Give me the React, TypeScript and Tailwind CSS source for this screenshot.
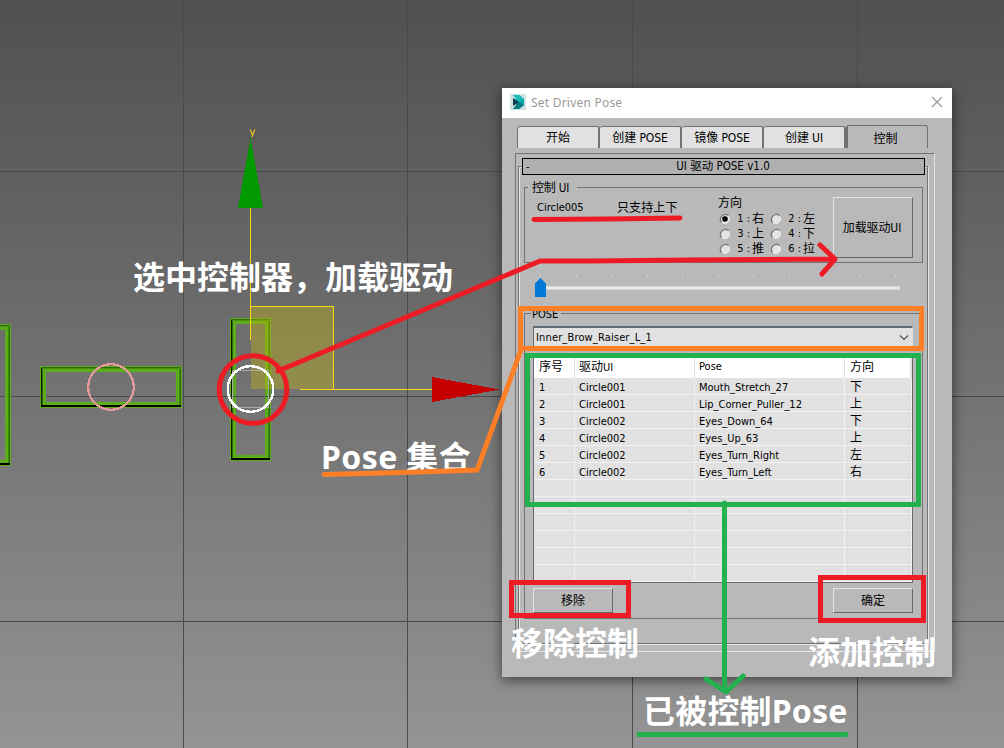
import React from "react";

const UI = "font-['DejaVu_Sans_Condensed','Noto_Sans_CJK_SC',sans-serif]";

const rows = [
  ["1", "Circle001", "Mouth_Stretch_27", "下"],
  ["2", "Circle001", "Lip_Corner_Puller_12", "上"],
  ["3", "Circle002", "Eyes_Down_64", "下"],
  ["4", "Circle002", "Eyes_Up_63", "上"],
  ["5", "Circle002", "Eyes_Turn_Right", "左"],
  ["6", "Circle002", "Eyes_Turn_Left", "右"],
  ["", "", "", ""],
  ["", "", "", ""],
  ["", "", "", ""],
  ["", "", "", ""],
  ["", "", "", ""],
  ["", "", "", ""],
];

function Frame({ x, y, w, h }: { x: number; y: number; w: number; h: number }) {
  const r = x + w;
  const b = y + h;
  return (
    <g fill="none" shapeRendering="crispEdges">
      <rect x={x + 3} y={y + 3} width={w - 6} height={h - 6} stroke="#5bad1c" strokeWidth="6" />
      <path d={`M${x + 1} ${y + 1.5}H${r - 1.5}V${b - 1}`} stroke="#2f6a0d" />
      <path d={`M${x + 2} ${y + 2.5}H${r - 3}`} stroke="#448f14" />
      <path d={`M${x + 1.5} ${y + 2}V${b - 1}`} stroke="#0a1500" />
      <path d={`M${x + 2.5} ${y + 3}V${b - 3}`} stroke="#2f6a0d" />
      <path d={`M${r - 2.5} ${y + 3}V${b - 3}`} stroke="#3f8512" />
      <path d={`M${x + 1} ${b - 2}H${r - 1}`} stroke="#000" strokeWidth="2" />
    </g>
  );
}

function Scene() {
  return (
    <svg className="absolute inset-0" width="1004" height="748" viewBox="0 0 1004 748">
      <Frame x={-100} y={324} w={111} h={142} />
      <Frame x={40} y={366} w={142} h={42} />
      <Frame x={230} y={318} w={41} h={143} />
      <g stroke="#4a4a4a" shapeRendering="crispEdges">
        <path d="M183.5 0V748M407.5 0V748M632.5 0V748M857.5 0V748M0 171.5H1004M0 396.5H5M11 396.5H43M46 396.5H176M182 396.5H1004M0 621.5H1004" />
      </g>
      <circle cx="111" cy="387" r="22.8" fill="none" stroke="#e59a9a" strokeWidth="2.2" shapeRendering="crispEdges" />
      <rect x="251" y="307" width="83" height="82" fill="#c8b80f" fillOpacity="0.38" />
      <path d="M250.5 208V340M251 306.5H333.5V389M300 389.5H432" fill="none" stroke="#f2d80a" shapeRendering="crispEdges" />
      <path d="M250.5 138L263 208H238Z" fill="#009a00" shapeRendering="crispEdges" />
      <path d="M499.5 389.5L432 377V402Z" fill="#c60000" shapeRendering="crispEdges" />
      <path d="M250 129.500l2.300 5M254.800 129.500l-3 7.500" fill="none" stroke="#e8c81a" strokeWidth="1.200" />
      <path d="M500.500 381l2 5" fill="none" stroke="#a08f1c" />
      <rect x="232.500" y="370.500" width="36" height="37" fill="none" stroke="#aaa" shapeRendering="crispEdges" />
      <circle cx="250.500" cy="389" r="22.800" fill="none" stroke="#fff" strokeWidth="2.400" shapeRendering="crispEdges" />
    </svg>
  );
}

function Tab({ label, active }: { label: string; active?: boolean }) {
  return active ? (
    <div className="flex h-[23px] w-[82px] items-center justify-center rounded-t-[3px] border-x border-t border-[#6f6f6f] border-l-2 pt-[3px] pr-1">{label}</div>
  ) : (
    <div className="mt-px flex h-[22px] w-[82px] items-center justify-center rounded-t-[3px] border-t border-r-2 border-[#737373] bg-[#e1e1e1] pt-px first:w-[83px] first:border-l">{label}</div>
  );
}

function Radio({ label, checked }: { label: string; checked?: boolean }) {
  return (
    <div className="flex h-[15px] w-[51px] items-center">
      <svg width="12" height="12" viewBox="0 0 12 12" className="mr-[5px] -ml-px shrink-0">
        <circle cx="6" cy="6" r="4.500" fill="#e4e4e4" stroke="#eee" />
        <path d="M2.500 9.500A5 5 0 0 1 9.500 2.500" fill="none" stroke="#70757a" strokeWidth="1.300" />
        {checked && <circle cx="6" cy="6" r="2.800" fill="#000" />}
      </svg>
      <span className="w-[9px] shrink-0 text-center">{label.slice(0, 1)}</span>
      <span className="w-[7px] shrink-0 text-center">:</span>
      <span className="text-[12px]">{label.slice(1)}</span>
    </div>
  );
}

function Button({ children, tall }: { children: React.ReactNode; tall?: boolean }) {
  return (
    <button
      className={
        "flex w-20 items-center justify-center border border-t-[#e4e4e4] border-l-[#e4e4e4] border-r-[#686868] border-b-[#686868] bg-[#b9b9b9] text-[12px] " +
        (tall ? "h-[61px] pr-[2px] tracking-[-0.1px]" : "h-[25px] pt-px")
      }
    >
      {children}
    </button>
  );
}

function Dialog() {
  return (
    <div className={"absolute top-[88px] left-[502px] flex h-[589px] w-[450px] flex-col bg-[#b9b9b9] text-[11px] leading-[14px] text-black shadow-[0_3px_12px_rgba(0,0,0,0.55)] " + UI}>
      <header className="flex h-[30px] shrink-0 items-center bg-white pr-[9px] pl-2">
        <svg width="16" height="16" viewBox="0 0 16 16" className="-mt-[2px]">
          <rect width="16" height="16" fill="#d3e2e4" />
          <path d="M3 1H9L14 5V11L9 15H3L6 12V4Z" fill="#0aa3a6" />
          <path d="M3 1H9L14 5L9 8L6 5Z" fill="#18bdb8" />
          <path d="M9 8L14 11L9 15H3L6 11Z" fill="#087a82" />
          <path d="M3 4L9 8L3 12Z" fill="#093f50" />
        </svg>
        <h1 className="ml-[5px] flex-1 font-['Noto_Sans',sans-serif] text-[12px] tracking-[0.22px] text-[#999]">Set Driven Pose</h1>
        <svg width="12" height="12" viewBox="0 0 12 12" className="-mt-[2px]" stroke="#999" strokeWidth="1.200">
          <path d="M1 1L11 11M11 1L1 11" />
        </svg>
      </header>
      <nav className="mt-[7px] ml-[15px] flex text-[12px] tracking-[-0.1px]">
        <Tab label="开始" />
        <Tab label="创建 POSE" />
        <Tab label="镜像 POSE" />
        <Tab label="创建 UI" />
        <Tab label="控制" active />
      </nav>
      <main className="mt-[5px] ml-[13px] h-[499px] w-[420px] border border-t-[#737373] border-r-[#e6e6e6] border-b-[#e6e6e6] border-l-[#737373]">
        <div className="mt-3 ml-[2px] flex h-[478px] w-[410px] flex-col border border-[#737373] shadow-[1px_1px_0_#e6e6e6,inset_1px_1px_0_#e6e6e6]">
          <div className="-mt-[9px] ml-[3px] flex h-[17px] w-[403px] shrink-0 items-center border border-black bg-[#b0b0b0]">
            <span className="w-0 pl-[3px]">-</span>
            <span className="flex-1 pr-1 text-center text-[11.500px] leading-[13px]">UI 驱动 POSE v1.0</span>
          </div>
          <section className="mt-3 ml-[5px] h-[76px] w-[399px] shrink-0 border border-[#737373]">
            <div className="-mt-2 ml-[3px] h-[16px] w-[49px] bg-[#b9b9b9] pl-1 text-[12px] leading-[17px] tracking-[-0.2px]">
              控制 <span className="text-[11.500px]">UI</span>
            </div>
            <div className="flex pl-3">
              <span className="mt-[5px] w-20">Circle005</span>
              <span className="mt-[5px] w-[101px] text-[12px] tracking-[0.1px]">只支持上下</span>
              <div className="w-[115px] shrink-0">
                <div className="h-[15px] text-[12px]">方向</div>
                <div className="ml-[2px] grid w-[102px] grid-cols-2">
                  <Radio label="1右" checked />
                  <Radio label="2左" />
                  <Radio label="3上" />
                  <Radio label="4下" />
                  <Radio label="5推" />
                  <Radio label="6拉" />
                </div>
              </div>
              <div className="mt-px">
                <Button tall>加载驱动UI</Button>
              </div>
            </div>
          </section>
          <div className="h-[50px] shrink-0 pt-[11px] pl-4">
            <svg width="366" height="24" viewBox="535 274 366 24" shapeRendering="crispEdges">
              {Array.from({ length: 11 }, (_, i) => (
                <rect key={i} x={540 + Math.round(i * 35.5)} y="274" width="1" height="3" fill="#cecece" />
              ))}
              <rect x="540" y="286" width="360" height="4" fill="#d6d6d6" />
              <rect x="540" y="287" width="359" height="2" fill="#e7eaea" />
              <path d="M535 283L540.500 278L546 283V297H535Z" fill="#0078d7" />
            </svg>
          </div>
          <section className="ml-[5px] h-[306px] w-[399px] shrink-0 border border-[#737373]">
            <div className="-mt-[7px] ml-[6px] h-[14px] w-[30px] bg-[#b9b9b9] pl-px leading-[15px]">POSE</div>
            <div className="mt-[5px] ml-2 flex h-[23px] w-[380px] items-center border border-t-2 border-[#5f6a72] border-r-[#e3e3e3] border-b-[#e3e3e3] bg-[#e1e1e1] pr-[3px] pl-[2px]">
              <span className="flex-1 tracking-[0.15px]">Inner_Brow_Raiser_L_1</span>
              <svg width="10" height="6" viewBox="0 0 10 6" className="-mt-px" fill="none" stroke="#555" strokeWidth="1.200">
                <path d="M1 .5L5 4.500L9 .5" />
              </svg>
            </div>
            <div className="mt-[6px] ml-2 h-[228px] w-[380px] overflow-hidden border border-[#696969] bg-[#e1e1e1]">
              <div className="grid h-[22px] grid-cols-[41px_120px_150px_1fr] bg-white text-[12px] leading-[22px]">
                <span className="border-r border-[#e1e1e1] pl-[5px]">序号</span>
                <span className="border-r border-[#e1e1e1] pl-1">驱动<span className="text-[11px]">UI</span></span>
                <span className="border-r border-[#e1e1e1] pl-1 text-[11px]">Pose</span>
                <span className="border-r-2 border-[#e1e1e1] pl-[5px]">方向</span>
              </div>
              {rows.map((r, i) => (
                <div key={i} className="grid h-[17px] grid-cols-[41px_120px_150px_1fr] border-b border-[#f2f2f2] leading-[19px]">
                  <span className="border-r border-[#f2f2f2] pl-[5px]">{r[0]}</span>
                  <span className="border-r border-[#f2f2f2] pl-1">{r[1]}</span>
                  <span className="border-r border-[#f2f2f2] pl-1">{r[2]}</span>
                  <span className="border-r border-[#f2f2f2] pl-[5px] text-[12px]">{r[3]}</span>
                </div>
              ))}
            </div>
            <div className="mt-[5px] ml-2 flex w-[380px] justify-between">
              <Button>移除</Button>
              <Button>确定</Button>
            </div>
          </section>
        </div>
      </main>
    </div>
  );
}

const NOTE = "absolute whitespace-pre font-['Noto_Sans','Noto_Sans_CJK_SC',sans-serif] text-[32px] leading-[40px] font-bold text-white ";

function Notes() {
  return (
    <>
      <p className={NOTE + "top-[257px] left-[133px]"}>选中控制器，加载驱动</p>
      <p className={NOTE + "top-[437px] left-[321px] tracking-[0.4px]"}>Pose 集合</p>
      <p className={NOTE + "top-[623px] left-[511px]"}>移除控制</p>
      <p className={NOTE + "top-[632px] left-[808px]"}>添加控制</p>
      <p className={NOTE + "top-[691px] left-[643px] tracking-[0.2px]"}>已被控制Pose</p>
      <svg className="pointer-events-none absolute inset-0" width="1004" height="748" viewBox="0 0 1004 748" fill="none" strokeWidth="5">
        <g stroke="#ed1c24">
          <circle cx="253" cy="389.500" r="33.800" />
          <path d="M278 371L540 261L590 261L688 260L834 259M820 245L835 259L822 274M534 219.500L608 219L680 218" strokeLinecap="round" strokeLinejoin="round" />
          <rect x="511.500" y="582.500" width="117" height="33" />
          <rect x="820.500" y="577.500" width="103" height="43" />
        </g>
        <g stroke="#ff7f27">
          <path d="M324 474.500L402 472.500L477 470L521 350" strokeLinecap="round" />
          <rect x="520.500" y="308.500" width="401" height="40" />
        </g>
        <g stroke="#22b14c">
          <rect x="527.500" y="355.500" width="391" height="149" />
          <path d="M724.500 503V690M706 679L726 692L743 676M639 734.500H846" strokeLinecap="round" strokeLinejoin="round" />
        </g>
      </svg>
    </>
  );
}

export default function App() {
  return (
    <div className="relative h-[748px] w-[1004px] overflow-hidden bg-linear-to-b from-[#505050] to-[#949494]">
      <Scene />
      <Dialog />
      <Notes />
    </div>
  );
}
